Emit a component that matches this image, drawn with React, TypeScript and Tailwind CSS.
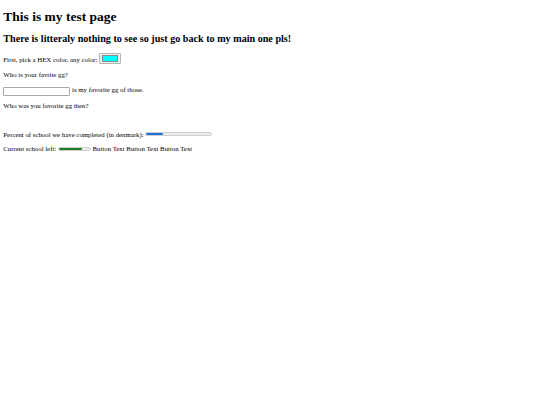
function ColorSwatch() {
  return (
    <span className="inline-block w-[22px] h-[11.5px] align-[-2.5px] rounded-[1px] border border-[#b5b5b5] bg-[#efefef] px-[2px] py-[1.5px]">
      <span className="block h-full w-full border-[0.75px] border-[#8a8a8a] bg-[#00ffff]" />
    </span>
  );
}

function Bar({ width, value, fill }: { width: number; value: number; fill: string }) {
  return (
    <span
      className="inline-block h-[4px] align-[0.5px] overflow-hidden rounded-full border-[0.5px] border-[#cfcfcf] bg-[#ececec]"
      style={{ width }}
    >
      <span className={`block h-full rounded-full ${fill}`} style={{ width: `${value}%` }} />
    </span>
  );
}

export default function App() {
  return (
    <div className="min-h-screen bg-white px-[3.33px] pt-[8.8px] text-black font-['Liberation_Serif','Times_New_Roman',serif]">
      <h1 className="text-[13.5px] font-bold leading-[15.5px]">This is my test page</h1>
      <h2 className="mt-[8.8px] text-[10.15px] font-bold leading-[11.6px]">
        There is litteraly nothing to see so just go back to my main one pls!
      </h2>

      <div className="mt-[8.3px] flex flex-col gap-[6.67px] text-[6.8px] leading-[7.7px]">
        <p>
          First, pick a HEX color, any color: <ColorSwatch />
        </p>
        <p>Who is your favrite gg?</p>
        <p>
          <input
            type="text"
            className="inline-block w-[67px] h-[9px] align-[-2px] rounded-[1px] border border-[#a9a9a9] bg-white"
          />{' '}
          is my favorite gg of those.
        </p>
        <p>Who was you favorite gg then?</p>

        {/* empty line */}
        <p className="h-[7.7px]" />

        <p>
          Percent of school we have completed (in denmark):{' '}
          <Bar width={67} value={25} fill="bg-[#1f6fd6]" />
        </p>
        <p>
          Current school left: <Bar width={33} value={76} fill="bg-[#1e7b1e]" /> Button Text Button Text Button Text
        </p>
      </div>
    </div>
  );
}
